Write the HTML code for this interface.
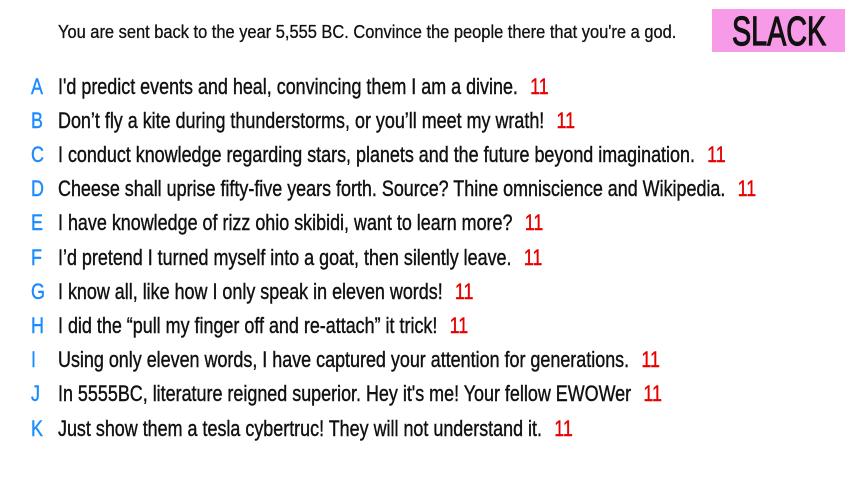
<!DOCTYPE html>
<html><head><meta charset="utf-8"><style>
body{margin:0;width:853px;height:480px;background:#fff;overflow:hidden;font-family:"Liberation Sans",sans-serif;color:#111;position:relative}
.h{position:absolute;left:58px;top:22px;font-size:18px;white-space:nowrap;transform:scaleX(0.913);transform-origin:0 0;-webkit-text-stroke:0.3px #111}
.s{position:absolute;left:712px;top:9px;width:133px;height:43px;background:#f79ae8}
.s div{position:absolute;left:20px;top:0;font-size:41px;line-height:45px;color:#111;transform:scaleX(0.7);transform-origin:0 0;white-space:nowrap;-webkit-text-stroke:1.2px #111}
.l{position:absolute;left:0;font-size:22px;white-space:nowrap;line-height:24px;width:853px;-webkit-text-stroke:0.4px currentColor}
.l b{font-weight:normal;color:#1a8cff;position:absolute;left:31px;transform:scaleX(0.815);transform-origin:0 0}
.l span{position:absolute;left:58px;transform:scaleX(0.815);transform-origin:0 0}
.l i{font-style:normal;color:#e60000;margin-left:15px}
</style></head><body>
<div class="h">You are sent back to the year 5,555 BC. Convince the people there that you're a god.</div>
<div class="s"><div>SLACK</div></div>
<div class="l" style="top:75px"><b>A</b><span>I'd predict events and heal, convincing them I am a divine.<i>11</i></span></div>
<div class="l" style="top:109px"><b>B</b><span>Don’t fly a kite during thunderstorms, or you’ll meet my wrath!<i>11</i></span></div>
<div class="l" style="top:143px"><b>C</b><span>I conduct knowledge regarding stars, planets and the future beyond imagination.<i>11</i></span></div>
<div class="l" style="top:177px"><b>D</b><span>Cheese shall uprise fifty-five years forth. Source? Thine omniscience and Wikipedia.<i>11</i></span></div>
<div class="l" style="top:211px"><b>E</b><span>I have knowledge of rizz ohio skibidi, want to learn more?<i>11</i></span></div>
<div class="l" style="top:246px"><b>F</b><span>I’d pretend I turned myself into a goat, then silently leave.<i>11</i></span></div>
<div class="l" style="top:280px"><b>G</b><span>I know all, like how I only speak in eleven words!<i>11</i></span></div>
<div class="l" style="top:314px"><b>H</b><span>I did the “pull my finger off and re-attach” it trick!<i>11</i></span></div>
<div class="l" style="top:348px"><b>I</b><span>Using only eleven words, I have captured your attention for generations.<i>11</i></span></div>
<div class="l" style="top:382px"><b>J</b><span>In 5555BC, literature reigned superior. Hey it's me! Your fellow EWOWer<i>11</i></span></div>
<div class="l" style="top:417px"><b>K</b><span>Just show them a tesla cybertruc! They will not understand it.<i>11</i></span></div>
</body></html>
